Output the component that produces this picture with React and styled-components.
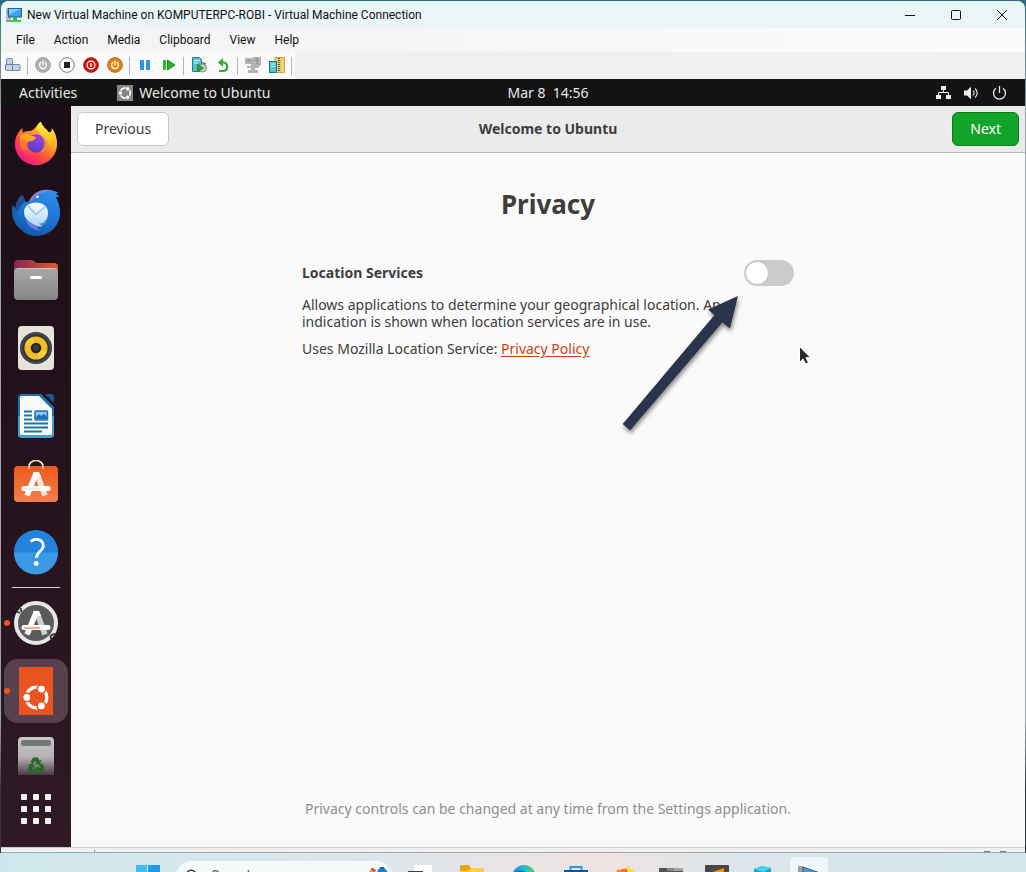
import React from 'react';
import styled, { createGlobalStyle, css } from 'styled-components';

const windowsFont = 'Roboto, "Open Sans", sans-serif';
const ubuntuFont = '"Noto Sans", "Open Sans", sans-serif';

const GlobalStyle = createGlobalStyle`
  *, *::before, *::after { box-sizing: border-box; }
  body { margin: 0; font-family: ${ubuntuFont}; background: #2f6b7f; }
  button { margin: 0; padding: 0; border: 0; background: none; color: inherit; font: inherit; }
  svg { display: block; }
`;

const Desktop = styled.div`
  display: flex;
  flex-direction: column;
  min-height: 100vh;
  background: linear-gradient(#2f6b7f 0, #9aa6ab 120px, #9aa6ab 720px, #30383f 790px, #30383f 100%);
`;

const VmWindow = styled.section`
  flex: 1;
  display: flex;
  flex-direction: column;
  margin: 1px 1px 0;
  border-radius: 8px 8px 0 0;
  overflow: hidden;
  background: #f0f0f0;
  font-family: ${windowsFont};
  color: #111;
`;

const TitleBar = styled.header`
  display: flex;
  align-items: center;
  height: 27px;
  padding-left: 5px;
  gap: 5px;
  background: #eaf5f8;
`;

const WindowTitle = styled.h1`
  flex: 1;
  margin: 0;
  font-size: 12px;
  font-weight: 400;
  line-height: 16px;
`;

const CaptionButtons = styled.div`
  display: flex;
`;

const CaptionButton = styled.button`
  display: grid;
  place-items: center;
  width: 46px;
  height: 27px;
`;

const MenuBar = styled.nav`
  display: flex;
  align-items: center;
  gap: 19px;
  height: 24px;
  padding-left: 15px;
  background: linear-gradient(90deg, #f3f3f3, #fbfbfb);
`;

const MenuItem = styled.button`
  font-size: 12px;
  line-height: 16px;
`;

const Toolbar = styled.div`
  display: flex;
  align-items: flex-start;
  width: 294px;
  height: 27px;
  background: #fafafa;
`;

const ToolButton = styled.button`
  display: grid;
  place-items: center;
  width: 24px;
  height: 26px;
`;

const ToolSeparator = styled.span`
  width: 1px;
  height: 18px;
  margin: 5px 3px 0 2px;
  background: #b4b4b4;
`;

const Guest = styled.div`
  flex: 1;
  display: flex;
  flex-direction: column;
  font-family: ${ubuntuFont};
`;

const TopBar = styled.div`
  display: grid;
  grid-template-columns: 70px 1fr auto 1fr;
  align-items: center;
  height: 27px;
  background: #131313;
  color: #e8e8e8;
  font-size: 14px;
  line-height: 20px;
`;

const TopLeft = styled.div`
  grid-column: 1 / 3;
  display: flex;
  align-items: center;
  padding-left: 18px;
  gap: 40px;
`;

const AppMenu = styled.button`
  display: flex;
  align-items: center;
  gap: 6px;
`;

const Tray = styled.button`
  justify-self: end;
  display: flex;
  align-items: center;
  gap: 13px;
  padding-right: 18px;
`;

const GuestBody = styled.div`
  flex: 1;
  display: flex;
`;

const Dock = styled.nav`
  display: flex;
  flex-direction: column;
  align-items: center;
  width: 70px;
  padding-top: 4px;
  background: linear-gradient(#1b0e16, #24121c 45%, #2f1a26);
`;

const DockItem = styled.button`
  position: relative;
  display: grid;
  place-items: center;
  width: 64px;
  height: ${(p) => (p.$clipped ? 50 : 68)}px;
  ${(p) => p.$clipped && css`
    place-items: start center;
    padding-top: 10px;
    overflow: hidden;
  `}
`;

const DockTile = styled.span`
  display: grid;
  place-items: center;
  width: 64px;
  height: 64px;
  border-radius: 14px;
  background: ${(p) => (p.$active ? '#56414d' : 'transparent')};
`;

const RunningDot = styled.span`
  position: absolute;
  left: 0;
  top: 31px;
  width: 6px;
  height: 6px;
  border-radius: 50%;
  background: #e95420;
`;

const DockDivider = styled.hr`
  width: 48px;
  height: 1px;
  margin: 1px 0;
  border: 0;
  background: #d8d2d6;
`;

const Wizard = styled.main`
  flex: 1;
  display: flex;
  flex-direction: column;
  background: #fafafa;
  color: #3d3d3d;
`;

const WizardHeader = styled.header`
  display: flex;
  align-items: center;
  justify-content: space-between;
  height: 47px;
  padding: 0 6px;
  border-bottom: 1px solid #b8b8b8;
  background: #ebebeb;
`;

const HeaderSide = styled.div`
  flex: 1;
  display: flex;
  justify-content: ${(p) => (p.$end ? 'flex-end' : 'flex-start')};
`;

const WizardTitle = styled.h2`
  margin: 0;
  font-size: 14px;
  font-weight: 700;
  line-height: 20px;
`;

const NavButton = styled.button`
  height: 34px;
  padding: 0 17px;
  border: 1px solid ${(p) => (p.$primary ? '#0d7a1b' : '#cdc7c2')};
  border-radius: 6px;
  background: ${(p) => (p.$primary ? '#12a428' : '#fff')};
  color: ${(p) => (p.$primary ? '#fff' : '#3d3d3d')};
  font-size: 14px;
  line-height: 20px;
`;

const Page = styled.div`
  flex: 1;
  display: flex;
  flex-direction: column;
  width: 100%;
  max-width: 492px;
  margin: 0 auto;
  padding: 33px 0 28px;
`;

const PageTitle = styled.h3`
  margin: 0;
  text-align: center;
  font-size: 26px;
  font-weight: 700;
  line-height: 36px;
`;

const Setting = styled.section`
  position: relative;
  margin-top: 37px;
  font-size: 14px;
`;

const SettingRow = styled.div`
  display: flex;
  align-items: center;
  justify-content: space-between;
  height: 28px;
`;

const SettingLabel = styled.label`
  font-weight: 700;
  line-height: 20px;
`;

const Switch = styled.input`
  appearance: none;
  display: flex;
  align-items: center;
  width: 50px;
  height: 26px;
  margin: 0;
  padding: 1px;
  border-radius: 13px;
  background: #cbcbcb;
  &::before {
    content: '';
    width: 24px;
    height: 24px;
    border-radius: 50%;
    border: 1px solid #c4c4c4;
    background: #fff;
  }
  &:checked { justify-content: flex-end; background: #12a428; }
`;

const SettingText = styled.div`
  display: flex;
  flex-direction: column;
  gap: 10px;
  margin-top: 9px;
`;

const Paragraph = styled.p`
  margin: 0;
  line-height: 17px;
  white-space: pre-line;
`;

const PolicyLink = styled.a`
  color: #cf3f0d;
  text-underline-offset: 2px;
`;

const Annotation = styled.svg`
  position: absolute;
  left: 308px;
  top: 27px;
  pointer-events: none;
`;

const FootNote = styled.p`
  margin: auto 0 0;
  color: #8e8e8e;
  font-size: 14px;
  line-height: 20px;
  text-align: center;
  white-space: nowrap;
`;

const StatusStrip = styled.div`
  display: flex;
  align-items: flex-end;
  gap: 10px;
  height: 6px;
  padding: 0 19px 0 93px;
  border-top: 1px solid #c9cdca;
  border-bottom: 1px solid #a5a9ab;
  background: #f0f0f0;
`;

const StatusTick = styled.span`
  width: 1px;
  height: 2px;
  margin-right: auto;
  background: #8d8d8d;
`;

const StatusMark = styled.span`
  width: 6px;
  height: 1px;
  background: #777;
`;

const Taskbar = styled.footer`
  display: flex;
  align-items: flex-start;
  height: 19px;
  padding-left: 122px;
  overflow: hidden;
  background: linear-gradient(90deg, #cfe7ec 0, #d9e9ec 30%, #e2e5ea 42%, #efe3e2 58%, #dce6ea 72%, #d2e7eb 100%);
`;

const TaskSlot = styled.button`
  flex: none;
  display: flex;
  justify-content: center;
  width: ${(p) => (p.$wide ? 52 : 46)}px;
  height: 48px;
  padding: 4px 4px 4px;
`;

const TaskTile = styled.span`
  display: flex;
  justify-content: center;
  width: 38px;
  height: 40px;
  padding-top: 8px;
  border-radius: 4px;
  background: ${(p) => (p.$active ? '#eef7f9' : 'transparent')};
`;

const SearchPill = styled.label`
  flex: none;
  display: flex;
  align-items: flex-start;
  gap: 12px;
  width: 216px;
  height: 32px;
  margin: 8px 2px 0;
  padding: 6px 0 0 8px;
  border-radius: 16px;
  background: #f5fafb;
`;

const SearchInput = styled.input`
  width: 136px;
  height: 18px;
  padding: 0;
  border: 0;
  background: transparent;
  font-family: ${windowsFont};
  font-size: 14px;
  &::placeholder { color: #5c6163; opacity: 1; }
`;

const Svg = ({ size = 16, w, h, box, children }) => (
  <svg width={w || size} height={h || size} viewBox={box || `0 0 ${w || size} ${h || size}`} fill="none" aria-hidden="true">
    {children}
  </svg>
);

/* Windows chrome icons */
const VmIcon = () => (
  <Svg>
    <rect x="0" y="1" width="5" height="12" fill="#b9bcbe" />
    <path d="M1 3h3M1 5h3M1 7h3" stroke="#777" />
    <rect x="2.500" y="1.500" width="13" height="8.500" fill="#3aa3ee" stroke="#27628f" />
    <path d="M3 2h11L3 8z" fill="#80c8fb" />
    <path d="M7 10h4v4H7z" fill="#34b553" />
    <path d="M4 13h11v2H4z" fill="#3ccf4e" />
    <path d="M0 13h4v2H0z" fill="#9a9a9a" />
  </Svg>
);

const Keys = () => (
  <Svg>
    <g fill="#c3d1e6" stroke="#74849f">
      <path d="M1.500 7.500v-5q0-1 1-1h4q1 0 1 1v5z" />
      <path d="M.5 7.500h7v6h-6q-1 0-1-1z" />
      <path d="M7.500 7.500h6.500q1 0 1 1v4q0 1-1 1H7.500z" />
    </g>
  </Svg>
);

const Round = ({ fill, ring, children }) => (
  <Svg>
    <circle cx="8" cy="8" r="7.300" fill={fill} stroke={ring} strokeWidth="1" />
    {children}
  </Svg>
);
const powerMark = (
  <g stroke="#fff" strokeWidth="1.300" strokeLinecap="round">
    <path d="M8 4v4M5.800 5.500a3.400 3.400 0 1 0 4.400 0" />
  </g>
);
const Start = () => <Round fill="#b1b1b1" ring="#999">{powerMark}</Round>;
const TurnOff = () => <Round fill="#fff" ring="#777"><rect x="5" y="5" width="6" height="6" fill="#222" /></Round>;
const ShutDown = () => (
  <Round fill="#d3140d" ring="#9a100b">
    <circle cx="8" cy="8" r="3.900" stroke="#fff" strokeWidth="1.200" />
    <path d="M8 6v4" stroke="#fff" strokeWidth="1.400" />
  </Round>
);
const Save = () => <Round fill="#e5830d" ring="#ad6410">{powerMark}</Round>;
const Pause = () => <Svg><path d="M3 3h4v10H3zM9 3h4v10H9z" fill="#2f94e2" /></Svg>;
const Reset = () => <Svg><path d="M2 3h3v10H2z" fill="#2cba2c" /><path d="M6.500 3l7.500 5-7.500 5z" fill="#27b527" stroke="#149414" /></Svg>;
const Checkpoint = () => (
  <Svg>
    <path d="M1.500 .5h7l2 2v12h-9z" fill="#56c2cd" stroke="#20808c" />
    <path d="M3 3.500h6M3 6h4" stroke="#d9f6f8" />
    <circle cx="11.500" cy="11" r="4" fill="#c9cfca" stroke="#838a84" />
    <path d="M6.500 7l6 4-6 4z" fill="#27ad35" stroke="#127720" strokeWidth=".7" />
    <path d="M11 5.500l4 1.500" stroke="#777" strokeWidth="1.500" />
  </Svg>
);
const Revert = () => (
  <Svg>
    <path d="M4 14h4.500a4.300 4.300 0 0 0 0-8.500H6" stroke="#2eaa36" strokeWidth="2.200" />
    <path d="M3 5.500l5-4.500v9z" fill="#2eaa36" />
  </Svg>
);
const Enhanced = () => (
  <Svg>
    <path d="M0 1h8v6H0zM8 0h8v9H8zM2 9h12v2H2zM3 13h10v3H3zM6 6h4v7H6z" fill="#b3b3b3" />
    <path d="M2 3.500h4M10 3.500h4M12 1v6" stroke="#8b8b8b" />
  </Svg>
);
const Share = () => (
  <Svg>
    <path d="M6 .5h9.500v15H6z" fill="#f2d570" stroke="#caa437" />
    <path d="M10 1v14" stroke="#555" strokeWidth="2.500" strokeDasharray="1 1" />
    <rect x=".5" y="4.500" width="7" height="11" fill="#4fc4d2" stroke="#1b7d8b" />
    <path d="M2 7h4M2 9.500h4" stroke="#dcf7fa" />
  </Svg>
);

/* Circle of friends: the halo repeats the backdrop so the ring breaks around each head */
const UbuntuRing = ({ halo }) => (
  <g>
    <circle cx="0" cy="0" r="10.300" stroke="#fff" strokeWidth="3.200" />
    <g fill="#fff" stroke={halo} strokeWidth="1.600">
      <circle cx="-9.700" cy="0" r="4.200" />
      <circle cx="4.900" cy="-8.400" r="4.200" />
      <circle cx="4.900" cy="8.400" r="4.200" />
    </g>
  </g>
);
const WelcomeSmall = () => (
  <Svg>
    <rect width="16" height="16" fill="#858585" />
    <g transform="translate(8.200 8) scale(.5)"><UbuntuRing halo="#858585" /></g>
  </Svg>
);
const Network = () => (
  <Svg w={15} h={14}>
    <path d="M5 0h5v4H5zM0 9h5v4H0zM10 9h5v4h-5z" fill="#eee" />
    <path d="M7.500 3v4M2.500 10V6.500h10V10" stroke="#eee" />
  </Svg>
);
const Volume = () => (
  <Svg w={15} h={14}>
    <path d="M0 4.500h3L7 .8v12.400L3 9.500H0z" fill="#eee" />
    <path d="M9 4.500q2 2.500 0 5M11.200 2.500q4 4.500 0 9" stroke="#ddd" strokeWidth="1.200" />
  </Svg>
);
const Power = () => (
  <Svg w={15} h={14}>
    <path d="M7.500 0v7M4 2.200a6 6 0 1 0 7 0" stroke="#eee" strokeWidth="1.300" />
  </Svg>
);

/* Dock icons */
const Firefox = () => (
  <Svg size={48}>
    <defs>
      <linearGradient id="fxBody" x1="40" y1="6" x2="12" y2="44" gradientUnits="userSpaceOnUse">
        <stop offset="0" stopColor="#ffdf3a" /><stop offset=".35" stopColor="#ff9a25" />
        <stop offset=".65" stopColor="#ff4a42" /><stop offset="1" stopColor="#f0128c" />
      </linearGradient>
      <linearGradient id="fxTail" x1="34" y1="2" x2="36" y2="40" gradientUnits="userSpaceOnUse">
        <stop offset="0" stopColor="#fff04c" /><stop offset=".5" stopColor="#ffbd24" /><stop offset="1" stopColor="#ff7a2e" stopOpacity="0" />
      </linearGradient>
      <radialGradient id="fxGlobe" cx=".65" cy=".2" r=".9">
        <stop offset="0" stopColor="#a23fe0" /><stop offset="1" stopColor="#4b43c8" />
      </radialGradient>
      <linearGradient id="fxHead" x1="10" y1="14" x2="20" y2="40" gradientUnits="userSpaceOnUse">
        <stop offset="0" stopColor="#ff9a25" /><stop offset=".5" stopColor="#ff6a33" /><stop offset="1" stopColor="#ff3f55" stopOpacity="0" />
      </linearGradient>
    </defs>
    <path d="M29 1.700c1 5 5.500 7 8 11l2-1c1-1 1-2 .8-3.500 3.500 4.500 5.200 10 5.200 16C45 36 35.500 45 24 45S3 36 3 24.500C3 17 6 12 10.500 7.700c-.3 2 0 3.500.5 5 1.800-1.200 4-2 7-1.700C23.500 10 24.500 4 29 1.700z" fill="url(#fxBody)" />
    <path d="M29 1.700c1 5 5.500 7 8 11l2-1c1-1 1-2 .8-3.500 8 11 6 24-3.800 31 4-7 3-14-2-20-4-5-8-7-9-11 .6-3.500 2-6 4-6.500z" fill="url(#fxTail)" />
    <circle cx="24" cy="23.500" r="9.300" fill="url(#fxGlobe)" />
    <path d="M8 16c3-2.500 7-2.500 9.500-.5 2.500.3 4.500.8 6.500 2-1.500 3-5 3.500-7 4-2 .8-2 4-1 6 1.700 4 6 6 10 5-6 6-18 1-18-9 0-3 0-5 0-7.500z" fill="url(#fxHead)" />
    <path d="M8 16c3-2.500 7-2.500 9.500-.5 2.500.3 4.500.8 6.500 2-1.500 3-5 3.500-7 4-3-.8-6-3-9-5.500z" fill="#ffa62b" />
    <path d="M28 14.500c4.500 1 8 6 7 11-.8 5-5 8-9 8.300 5.500-4 7.500-12 2-19.300z" fill="#ffb52a" opacity=".3" />
  </Svg>
);

const Thunderbird = () => (
  <Svg size={48}>
    <defs>
      <linearGradient id="tbBody" x1="36" y1="2" x2="20" y2="48" gradientUnits="userSpaceOnUse">
        <stop offset="0" stopColor="#2f8fe8" /><stop offset=".6" stopColor="#1a72d4" /><stop offset="1" stopColor="#1257a8" />
      </linearGradient>
      <linearGradient id="tbMail" x1="24" y1="14" x2="24" y2="35" gradientUnits="userSpaceOnUse">
        <stop offset="0" stopColor="#fff" /><stop offset="1" stopColor="#b4dbf8" />
      </linearGradient>
    </defs>
    <path d="M10 7c3 3 4 7 3.500 11L24 47C9 46 1 36 0 25c0-3 0-5 .6-8l3 3C4 14 6.500 10 10 7z" fill="#1c5fb0" />
    <path d="M3.600 20C4 14 6.500 10 10 7c2 3 3 6 2 10L8 28z" fill="#1d4f93" />
    <path d="M17 13.500C21 5 29 1 37 2c4 .4 7 1.500 10 3l-4 .8c2 .7 3.300 1.600 4.300 3l-3.300.5C47 15 48 20 48 25c0 13-11 23-24 23C12 48 4 39 5 27c1-6 4-10 8-13z" fill="url(#tbBody)" />
    <path d="M16.500 14C20.500 5 28 1 36 1.800c2 .2 4 .6 6 1.400C32 2.500 24 6 21 13z" fill="#a77be0" opacity=".8" />
    <circle cx="25.500" cy="8.700" r="1.300" fill="#fff" />
    <path d="M13 31c4 6 14 8 22 2-2 4-6 6-11 6l5 4c-8-1-14-5-16-12z" fill="#7a83e2" opacity=".8" />
    <path d="M36 25c0 8-5 11-9 10.500l3.500 3C19 38 12 31 12 24.500S17.500 14.500 24 14.500 36 18 36 25z" fill="url(#tbMail)" />
    <path d="M16 18l7 7.500q1 1 2 0l8-6.500" stroke="#8abced" strokeWidth="1.200" />
  </Svg>
);

const Files = () => (
  <Svg size={48}>
    <defs>
      <linearGradient id="flBack" x1="2" y1="0" x2="46" y2="0" gradientUnits="userSpaceOnUse"><stop stopColor="#87284f" /><stop offset="1" stopColor="#e5562a" /></linearGradient>
      <linearGradient id="flFront" x1="0" y1="10" x2="0" y2="44" gradientUnits="userSpaceOnUse"><stop stopColor="#aaa" /><stop offset="1" stopColor="#868686" /></linearGradient>
    </defs>
    <path d="M2 8q0-4 4-4h13q2 0 3.500 1.500T26 7h16q4 0 4 4v12H2z" fill="url(#flBack)" />
    <rect x="2" y="12" width="44" height="32" rx="4" fill="url(#flFront)" />
    <path d="M5 12.500h38" stroke="#c6c6c6" />
    <rect x="18" y="20" width="12" height="3" rx="1" fill="#fff" />
  </Svg>
);

const Rhythmbox = () => (
  <Svg size={48}>
    <rect x="6" y="2" width="36" height="44" rx="4" fill="#e8e4dc" />
    <circle cx="24" cy="24" r="16" fill="#30333b" />
    <circle cx="24" cy="24" r="14.500" stroke="#575b66" />
    <circle cx="24" cy="24" r="11.500" fill="#f2bd1d" />
    <path d="M24 24L13 20a11.500 11.500 0 0 1 8-7zM24 24l11 4a11.500 11.500 0 0 1-8 7z" fill="#ffd84d" opacity=".55" />
    <circle cx="24" cy="24" r="5.300" fill="#25262b" />
    <circle cx="24" cy="23.500" r="3" fill="#3a3b40" />
  </Svg>
);

const Writer = () => (
  <Svg size={48}>
    <path d="M10 2h19l13 13v27q0 4-4 4H10q-4 0-4-4V6q0-4 4-4z" fill="#1873b5" />
    <path d="M6 24h36v18q0 4-4 4H10q-4 0-4-4z" fill="#419fd0" />
    <path d="M10 4h17l13 13v24q0 2-2 2H10q-2 0-2-2V6q0-2 2-2z" fill="#fafafa" />
    <path d="M33 2h6q3 0 3 3v6z" fill="#155c94" />
    <path d="M12 19.500h8M12 23.500h8M12 27.500h8M12 31.500h24M12 35.500h24M12 39.500h18" stroke="#1b72ae" strokeWidth="2" />
    <rect x="23" y="19" width="12.500" height="9" rx="1" fill="#82c9ed" stroke="#1b72ae" strokeWidth="1.500" />
    <path d="M24 27v-2l3-3 2 2 3-2 3 3v2z" fill="#1b72ae" />
  </Svg>
);

/* The crossed brush-and-pencil emblem of the software tools */
const Emblem = ({ bar, shade }) => (
  <g>
    <path d="M25 14l8 21.500" stroke={shade} strokeWidth="5.500" />
    <path d="M24.500 12.500L15 35.500" stroke="#fff" strokeWidth="5.500" />
    <path d="M21 12h6l2 5h-6z" fill="#fff" />
    <path d="M12 28.500h24" stroke="#fff" strokeWidth="5" strokeLinecap="round" />
    <path d="M12 29h16" stroke={bar} strokeWidth="1" />
  </g>
);

const Software = () => (
  <Svg size={48}>
    <defs><linearGradient id="swBag" x1="0" y1="8" x2="0" y2="44" gradientUnits="userSpaceOnUse"><stop stopColor="#ee5a20" /><stop offset="1" stopColor="#f2824e" /></linearGradient></defs>
    <rect x="2" y="6" width="44" height="36" rx="4" fill="url(#swBag)" />
    <path d="M17 8V6.500a7 6 0 0 1 14 0V8" stroke="#f5ddae" strokeWidth="1.700" strokeLinecap="round" />
    <Emblem bar="#f1d7ca" shade="#f3e4dc" />
  </Svg>
);

const Help = () => (
  <Svg size={48}>
    <circle cx="24" cy="24" r="22" fill="#2383dc" />
    <path d="M2 24.500a22 22 0 0 0 44 0z" fill="#3a99e4" />
    <path d="M18.500 13.500q3-2.500 6.500-2.200c7 .8 8 7.500 3.500 11.500-3 2.700-4 4-4 7" stroke="#fff" strokeWidth="2.800" />
    <circle cx="24.200" cy="35.500" r="2.400" fill="#fff" />
  </Svg>
);

const Updater = () => (
  <Svg size={48}>
    <circle cx="24" cy="24" r="20" fill="#5b5c59" stroke="#e6e6e6" strokeWidth="4" />
    <path d="M4.500 12.500l3.500 1.500M8.500 9l1 4M39 36l4.500-1M38.500 36l.5 4" stroke="#343833" strokeWidth="1.800" />
    <Emblem bar="#e8562a" shade="#d0d0d0" />
  </Svg>
);

const Welcome = () => (
  <Svg size={48}>
    <rect x="7" y="0" width="34" height="48" fill="#e95420" />
    <g transform="translate(24.500 30.500)"><UbuntuRing halo="#e95420" /></g>
  </Svg>
);

const Trash = () => (
  <Svg size={48}>
    <defs><linearGradient id="trFade" x1="0" y1="2" x2="0" y2="40" gradientUnits="userSpaceOnUse"><stop stopColor="#c9c9c9" /><stop offset=".55" stopColor="#b2b0b1" /><stop offset="1" stopColor="#4b3b45" /></linearGradient></defs>
    <path d="M6 6q0-4 4-4h28q4 0 4 4v34H6z" fill="url(#trFade)" />
    <rect x="9" y="5" width="30" height="6" rx="2.500" fill="#757575" />
    <g fill="#216c22">
      {[0, 120, 240].map((a) => (
        <g key={a} transform={`translate(24 31) rotate(${a})`}>
          <path d="M-5.500-4l2.700-4.500h4.500l2 3.200 1.800-1-1.700 5.300-5-1 1.800-1.200-1.500-2-1.600 2.800z" />
        </g>
      ))}
    </g>
  </Svg>
);

const AppGrid = () => (
  <Svg size={48}>
    {[9, 21, 33].map((y) => [9, 21, 33].map((x) => (
      <rect key={`${x}-${y}`} x={x} y={y} width="6" height="6" rx="1" fill="#f3f3f3" />
    )))}
  </Svg>
);

/* Taskbar icons */
const WinLogo = () => <Svg size={24}><path d="M0 0h11v11H0zM12 0h12v11H12zM0 12h11v11H0zM12 12h12v11H12z" fill="#1f9be6" /><path d="M0 0h11v11H0z" fill="#41bdf0" /></Svg>;
const TaskView = () => <Svg size={24}><path d="M6 0h18v16H6z" fill="#fdfdfd" /><path d="M0 6h15v15H0z" fill="#414141" /></Svg>;
const Explorer = () => <Svg size={24}><path d="M0 1.500Q0 0 1.500 0H9l2 3h13v18H0z" fill="#e8a60f" /><path d="M0 6h8l3-3h13v18H0z" fill="#fdcd44" /></Svg>;
const Edge = () => (
  <Svg size={24}>
    <defs><linearGradient id="edgeArc" x1="0" y1="0" x2="24" y2="0" gradientUnits="userSpaceOnUse"><stop stopColor="#1b8fd6" /><stop offset=".5" stopColor="#2bb8d0" /><stop offset="1" stopColor="#5fcf62" /></linearGradient></defs>
    <circle cx="12" cy="12" r="12" fill="url(#edgeArc)" />
    <path d="M0 12q3-8 11-6 5 2 4 8l-3 10Q0 24 0 12z" fill="#1468b8" />
  </Svg>
);
const Store = () => <Svg size={24}><path d="M6.500 6V2h11v4" stroke="#1aa3ec" strokeWidth="2" /><path d="M0 5h24v18H0z" fill="#0f539c" /></Svg>;
const FirefoxTask = () => <Svg w={24} h={24} box="0 0 48 48"><circle cx="24" cy="27" r="20" fill="#ff6a2e" /><path d="M28 0l18 17-4 20-14-20z" fill="#ffdd38" /><path d="M3 20L10 7l5 7 9-5v8z" fill="#ff8a24" /><circle cx="25" cy="21" r="8" fill="#8038c8" /></Svg>;
const Servers = () => <Svg size={24}><path d="M0 3h24v20H0z" fill="#515355" /><path d="M8 3h7v3H8z" fill="#858789" /><path d="M15 3h9v3h-9z" fill="#a2a4a5" /></Svg>;
const Sublime = () => <Svg size={24}><rect width="24" height="24" rx="1" fill="#484848" /><path d="M5 8l14-5v5L5 13z" fill="#ff9800" /></Svg>;
const Cube = () => <Svg size={24}><path d="M3 4l8-3 9 2v17l-9 4-8-4z" fill="#16a8c0" /><path d="M3 4l8-3 9 2-8 4z" fill="#49d5e4" /></Svg>;
const HyperV = () => <Svg size={24}><path d="M1 1h5v15H1z" fill="#9aa0a5" /><path d="M6 2l17 6v12L6 14z" fill="#3f9be3" stroke="#4b5258" /></Svg>;
const Lens = () => <Svg size={16}><circle cx="7.500" cy="8" r="5" stroke="#333" strokeWidth="1.600" /><path d="M11 12l4 4" stroke="#333" /></Svg>;
const SearchArt = () => (
  <Svg w={34} h={26}>
    <path d="M7 9l6-8 4 3-6 7z" fill="#efa94d" /><path d="M12 2l2-2 4 3-2 2z" fill="#dc5146" />
    <path d="M17 11q2-11 7-11t8 11z" fill="#167fe4" /><circle cx="24" cy="0" r="2" fill="#0f64bc" />
  </Svg>
);

const tools = [
  ['Ctrl+Alt+Delete', Keys], null,
  ['Start', Start], ['Turn off', TurnOff], ['Shut down', ShutDown], ['Save', Save], null,
  ['Pause', Pause], ['Reset', Reset], null,
  ['Checkpoint', Checkpoint], ['Revert', Revert], null,
  ['Enhanced session', Enhanced], ['Share', Share], null,
];

const favourites = [
  ['Firefox', Firefox], ['Thunderbird', Thunderbird], ['Files', Files], ['Rhythmbox', Rhythmbox],
  ['LibreOffice Writer', Writer], ['Ubuntu Software', Software], ['Help', Help],
];

const tasks = [
  ['Task view', TaskView, true], ['File Explorer', Explorer, true], ['Edge', Edge, true], ['Store', Store, true],
  ['Firefox', FirefoxTask], ['Server Manager', Servers], ['Sublime Text', Sublime], ['Virtual drive', Cube], ['Hyper-V', HyperV],
];

const DockEntry = ({ name, icon: Icon, running, active }) => (
  <DockItem type="button" aria-label={name}>
    <DockTile $active={active}><Icon /></DockTile>
    {running && <RunningDot />}
  </DockItem>
);

const Pointer = () => (
  <Annotation width="210" height="160" viewBox="610 286 210 160" aria-hidden="true">
    <defs>
      <filter id="arrowShadow" x="-20%" y="-20%" width="140%" height="140%">
        <feDropShadow dx="1" dy="3" stdDeviation="2" floodColor="#000" floodOpacity=".45" />
      </filter>
    </defs>
    <path d="M738 296L708 309.500l6.300 5.800L622.700 424l7.300 6.500 92.300-108 7.700 6z" fill="#2a364b" filter="url(#arrowShadow)" />
    <path d="M799.500 346.500v16l3.500-3.500 2.500 5 3-1.300-2.500-5h4.500z" fill="#2b2b2b" stroke="#fff" strokeWidth="1" />
  </Annotation>
);

export default function App() {
  return (
    <Desktop>
      <GlobalStyle />
      <VmWindow>
        <TitleBar>
          <VmIcon />
          <WindowTitle>New Virtual Machine on KOMPUTERPC-ROBI - Virtual Machine Connection</WindowTitle>
          <CaptionButtons>
            <CaptionButton type="button" aria-label="Minimize"><Svg size={10}><path d="M0 5.500h10" stroke="#111" /></Svg></CaptionButton>
            <CaptionButton type="button" aria-label="Maximize"><Svg size={10}><rect x=".5" y=".5" width="9" height="9" rx="1" stroke="#111" /></Svg></CaptionButton>
            <CaptionButton type="button" aria-label="Close"><Svg size={10}><path d="M0 0l10 10M10 0L0 10" stroke="#111" /></Svg></CaptionButton>
          </CaptionButtons>
        </TitleBar>
        <MenuBar>
          {['File', 'Action', 'Media', 'Clipboard', 'View', 'Help'].map((m) => <MenuItem type="button" key={m}>{m}</MenuItem>)}
        </MenuBar>
        <Toolbar>
          {tools.map((t, i) => {
            if (!t) return <ToolSeparator key={i} />;
            const [name, Icon] = t;
            return <ToolButton type="button" key={name} aria-label={name}><Icon /></ToolButton>;
          })}
        </Toolbar>

        <Guest>
          <TopBar>
            <TopLeft>
              <button type="button">Activities</button>
              <AppMenu type="button"><WelcomeSmall />Welcome to Ubuntu</AppMenu>
            </TopLeft>
            <button type="button">Mar 8&nbsp; 14:56</button>
            <Tray type="button" aria-label="System menu"><Network /><Volume /><Power /></Tray>
          </TopBar>
          <GuestBody>
            <Dock>
              {favourites.map(([name, icon]) => <DockEntry key={name} name={name} icon={icon} />)}
              <DockDivider />
              <DockEntry name="Software Updater" icon={Updater} running />
              <DockEntry name="Welcome to Ubuntu" icon={Welcome} running active />
              <DockItem type="button" aria-label="Trash" $clipped><Trash /></DockItem>
              <DockEntry name="Show Applications" icon={AppGrid} />
            </Dock>
            <Wizard>
              <WizardHeader>
                <HeaderSide><NavButton type="button">Previous</NavButton></HeaderSide>
                <WizardTitle>Welcome to Ubuntu</WizardTitle>
                <HeaderSide $end><NavButton type="button" $primary>Next</NavButton></HeaderSide>
              </WizardHeader>
              <Page>
                <PageTitle>Privacy</PageTitle>
                <Setting>
                  <SettingRow>
                    <SettingLabel htmlFor="location">Location Services</SettingLabel>
                    <Switch id="location" type="checkbox" role="switch" />
                  </SettingRow>
                  <SettingText>
                    <Paragraph>
                      {'Allows applications to determine your geographical location. An\nindication is shown when location services are in use.'}
                    </Paragraph>
                    <Paragraph>
                      Uses Mozilla Location Service: <PolicyLink href="#privacy">Privacy Policy</PolicyLink>
                    </Paragraph>
                  </SettingText>
                  <Pointer />
                </Setting>
                <FootNote>Privacy controls can be changed at any time from the Settings application.</FootNote>
              </Page>
            </Wizard>
          </GuestBody>
        </Guest>
        <StatusStrip><StatusTick /><StatusMark /><StatusMark /></StatusStrip>
      </VmWindow>
      <Taskbar>
        <TaskSlot type="button" aria-label="Start" $wide><TaskTile><WinLogo /></TaskTile></TaskSlot>
        <SearchPill>
          <Lens />
          <SearchInput type="search" placeholder="Search" aria-label="Search" />
          <SearchArt />
        </SearchPill>
        {tasks.map(([name, Icon, wide]) => (
          <TaskSlot type="button" key={name} aria-label={name} $wide={wide}>
            <TaskTile $active={name === 'Hyper-V'}><Icon /></TaskTile>
          </TaskSlot>
        ))}
      </Taskbar>
    </Desktop>
  );
}
